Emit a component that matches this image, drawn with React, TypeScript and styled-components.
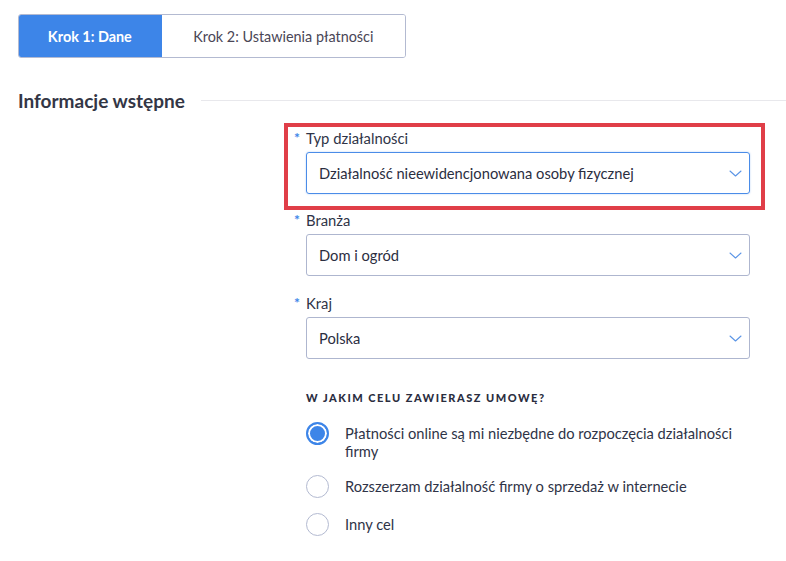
import { createGlobalStyle, styled } from 'styled-components';

const GlobalStyle = createGlobalStyle`
  * {
    box-sizing: border-box;
  }

  body {
    margin: 0;
    background: #fff;
    font-family: Lato, 'Open Sans', sans-serif;
    color: #2f3447;
  }
`;

const steps = ['Krok 1: Dane', 'Krok 2: Ustawienia płatności'];

const selects = [
  { label: 'Typ działalności', value: 'Działalność nieewidencjonowana osoby fizycznej', focused: true },
  { label: 'Branża', value: 'Dom i ogród', focused: false },
  { label: 'Kraj', value: 'Polska', focused: false },
];

const purposes = [
  'Płatności online są mi niezbędne do rozpoczęcia działalności firmy',
  'Rozszerzam działalność firmy o sprzedaż w internecie',
  'Inny cel',
];

const Chevron = () => (
  <svg width="13" height="7" viewBox="0 0 13 7" fill="none">
    <path d="M1 1l5.5 5L12 1" stroke="#5b95e6" strokeWidth="1.1" strokeLinecap="round" strokeLinejoin="round" />
  </svg>
);

const SelectField = ({ label, value, focused }: { label: string; value: string; focused: boolean }) => (
  <S.Field>
    <S.Label>
      <S.Star>*</S.Star>
      {label}
    </S.Label>
    <S.Select $focused={focused}>
      <span>{value}</span>
      <Chevron />
    </S.Select>
  </S.Field>
);

export default function App() {
  return (
    <S.Page>
      <GlobalStyle />
      <S.Steps>
        {steps.map((step, i) => (
          <S.Step key={step} $active={i === 0} $wide={i === 1}>
            {step}
          </S.Step>
        ))}
      </S.Steps>

      <S.SectionHead>
        <S.SectionTitle>Informacje wstępne</S.SectionTitle>
        <S.Rule />
      </S.SectionHead>

      <S.Form>
        <S.Highlight>
          <SelectField {...selects[0]} />
        </S.Highlight>
        <S.Rest>
          {selects.slice(1).map((s) => (
            <SelectField key={s.label} {...s} />
          ))}

          <S.Question>W jakim celu zawierasz umowę?</S.Question>
          <S.Radios>
            {purposes.map((p, i) => (
              <S.RadioRow key={p}>
                <S.Radio $checked={i === 0} />
                <S.RadioText>{p}</S.RadioText>
              </S.RadioRow>
            ))}
          </S.Radios>
        </S.Rest>
      </S.Form>
    </S.Page>
  );
}

const S = {
  Page: styled.div`
    width: 786px;
    height: 561px;
    padding: 14px 0 0 18px;
    overflow: hidden;
  `,
  Steps: styled.div`
    display: flex;
    width: 388px;
    height: 44px;
    border: 1px solid #b3bad1;
    border-radius: 3px;
    overflow: hidden;
  `,
  Step: styled.div<{ $active: boolean; $wide: boolean }>`
    display: flex;
    align-items: center;
    justify-content: center;
    width: ${({ $wide }) => ($wide ? '244px' : '144px')};
    margin: ${({ $active }) => ($active ? '-1px 0 -1px -1px' : '0')};
    background: ${({ $active }) => ($active ? '#3d85e8' : '#fff')};
    font-size: 14.4px;
    font-weight: ${({ $active }) => ($active ? 700 : 400)};
    color: ${({ $active }) => ($active ? '#fff' : '#4a4656')};
  `,
  SectionHead: styled.div`
    display: flex;
    align-items: center;
    gap: 16px;
    margin-top: 31px;
  `,
  SectionTitle: styled.h2`
    margin: 0;
    font-size: 19px;
    font-weight: 700;
    line-height: 24px;
    color: #333645;
  `,
  Rule: styled.div`
    flex: 1;
    height: 1px;
    margin-top: -2px;
    background: #e8e8ec;
  `,
  Form: styled.div`
    display: flex;
    flex-direction: column;
    width: 481px;
    margin: 10px 0 0 266px;
  `,
  Highlight: styled.div`
    padding: 1px 11px 12px 18px;
    border: 4px solid #e03e48;
  `,
  Rest: styled.div`
    display: flex;
    flex-direction: column;
    padding: 0 15px 0 22px;
  `,
  Field: styled.div`
    display: flex;
    flex-direction: column;
    & + & {
      margin-top: 17px;
    }
  `,
  Label: styled.div`
    display: flex;
    align-items: baseline;
    height: 24px;
    padding-top: 1px;
    margin-left: -12px;
    font-size: 14.8px;
    color: #2f3447;
  `,
  Star: styled.span`
    position: relative;
    top: -1px;
    width: 12px;
    font-size: 14px;
    font-weight: 700;
    color: #3d85e8;
  `,
  Select: styled.div<{ $focused: boolean }>`
    display: flex;
    align-items: center;
    justify-content: space-between;
    height: 42px;
    padding: 0 7px 0 12px;
    border: 1px solid ${({ $focused }) => ($focused ? '#4a8ce8' : '#aeb6cf')};
    border-radius: 3px;
    box-shadow: ${({ $focused }) => ($focused ? '0 0 2px rgba(74, 140, 232, 0.4)' : 'none')};
    font-size: 14.7px;
    color: #2b2e3f;
  `,
  Question: styled.div`
    margin-top: 32px;
    font-size: 11px;
    font-weight: 900;
    line-height: 14px;
    letter-spacing: 1.5px;
    text-transform: uppercase;
    color: #2b2e3f;
  `,
  Radios: styled.div`
    display: flex;
    flex-direction: column;
    gap: 15px;
    margin-top: 17px;
  `,
  RadioRow: styled.div`
    display: flex;
    align-items: flex-start;
    gap: 16px;
  `,
  Radio: styled.span<{ $checked: boolean }>`
    flex-shrink: 0;
    width: 23px;
    height: 23px;
    border-radius: 50%;
    border: ${({ $checked }) => ($checked ? '2px solid #3d85e8' : '1px solid #b3bad1')};
    background: ${({ $checked }) => ($checked ? '#3d85e8' : '#fff')};
    box-shadow: ${({ $checked }) => ($checked ? 'inset 0 0 0 2px #fff' : 'none')};
  `,
  RadioText: styled.span`
    padding-top: 2px;
    font-size: 14.7px;
    line-height: 18px;
    color: #2f3447;
  `,
};
